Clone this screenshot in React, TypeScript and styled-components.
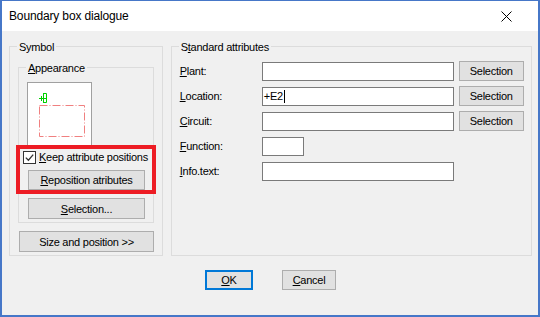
import styled, { createGlobalStyle } from 'styled-components';

const GlobalStyle = createGlobalStyle`
	html, body {
		margin: 0;
		padding: 0;
		width: 540px;
		height: 317px;
		overflow: hidden;
		background: #f0f0f0;
	}
`;

const Window = styled.div`
	width: 540px;
	height: 317px;
	box-sizing: border-box;
	display: flex;
	flex-direction: column;
	border: 2px solid #4677c8;
	border-top-width: 1px;
	background: #f0f0f0;
	font-family: 'Liberation Sans', Arial, sans-serif;
	font-size: 11px;
	letter-spacing: -0.25px;
	color: #000;
`;

const TitleBar = styled.header`
	height: 30px;
	flex-shrink: 0;
	display: flex;
	align-items: center;
	justify-content: space-between;
	padding: 0 26px 0 7px;
	background: #fff;
`;

const Title = styled.span`
	font-size: 12px;
	letter-spacing: -0.15px;
`;

const Body = styled.main`
	flex: 1;
	display: flex;
	flex-direction: column;
	padding: 15px 6px 0 7px;
`;

const Groups = styled.div`
	display: flex;
	gap: 8px;
`;

const GroupBox = styled.section<{ $width: number; $height: number; $pad: string }>`
	position: relative;
	box-sizing: border-box;
	width: ${(p) => p.$width}px;
	height: ${(p) => p.$height}px;
	padding: ${(p) => p.$pad};
	border: 1px solid #dcdcdc;
	display: flex;
	flex-direction: column;
	align-items: flex-start;
`;

const Caption = styled.span`
	position: absolute;
	top: -6px;
	left: 7px;
	padding: 0 2px;
	line-height: 13px;
	background: #f0f0f0;
`;

const Key = styled.span`
	text-decoration: underline;
`;

const Preview = styled.div`
	width: 65px;
	height: 63px;
	margin-left: 8px;
	box-sizing: border-box;
	border: 1px solid #a0a0a0;
	border-bottom: none;
	background: #fff;
`;

const Highlight = styled.div`
	width: 140px;
	height: 49px;
	margin-left: -3px;
	box-sizing: border-box;
	border: 4px solid #ed1c24;
	display: flex;
	flex-direction: column;
	align-items: flex-start;
	padding: 2px 0 0 3px;
`;

const CheckRow = styled.label`
	display: flex;
	align-items: center;
	gap: 3px;
	height: 13px;
	line-height: 13px;
`;

const Button = styled.button<{ $width: number; $height?: number; $default?: boolean }>`
	width: ${(p) => p.$width}px;
	height: ${(p) => p.$height ?? 21}px;
	box-sizing: border-box;
	padding: 0;
	margin: 0;
	font: inherit;
	letter-spacing: inherit;
	color: #000;
	background: #e1e1e1;
	border: ${(p) => (p.$default ? '2px solid #0078d7' : '1px solid #adadad')};
	display: flex;
	align-items: center;
	justify-content: center;
	flex-shrink: 0;
`;

const Spaced = styled.div<{ $top: number; $left: number }>`
	margin-top: ${(p) => p.$top}px;
	margin-left: ${(p) => p.$left}px;
`;

const Rows = styled.div`
	display: flex;
	flex-direction: column;
	gap: 5px;
`;

const Row = styled.div`
	display: flex;
	align-items: center;
	height: 20px;
`;

const Label = styled.span`
	width: 82px;
	line-height: 13px;
`;

const Field = styled.div<{ $width: number }>`
	width: ${(p) => p.$width}px;
	height: 19px;
	box-sizing: border-box;
	align-self: flex-end;
	border: 1px solid #7a7a7a;
	background: #fff;
	display: flex;
	align-items: center;
	padding-left: 1px;
	line-height: 13px;
`;

const Caret = styled.span`
	width: 1px;
	height: 13px;
	background: #000;
	margin-left: 1px;
`;

const SideButton = styled(Button)`
	margin-left: 5px;
`;

const Footer = styled.div`
	display: flex;
	justify-content: center;
	gap: 29px;
	margin-top: 14px;
`;

function PreviewDrawing() {
	return (
		<svg width="63" height="62" viewBox="0 0 63 62">
			<g stroke="#00d000" strokeWidth="1" fill="none">
				<path d="M11 15.5h5M13.5 13v5" />
				<path d="M15.5 10v10M15.5 10.5h3M15.5 19.5h3M18.5 10.5v9M15.5 15.5h3" />
			</g>
			<rect x="11.5" y="22.5" width="45" height="31" fill="none" stroke="#f08080" strokeWidth="1" strokeDasharray="8 2 1 2" />
		</svg>
	);
}

function CheckBox() {
	return (
		<svg width="13" height="13" viewBox="0 0 13 13">
			<rect x="0.5" y="0.5" width="12" height="12" fill="#fff" stroke="#333" />
			<path d="M2.8 6.6l2.6 2.6 4.8-5.6" fill="none" stroke="#333" strokeWidth="1.3" />
		</svg>
	);
}

function CloseIcon() {
	return (
		<svg width="11" height="11" viewBox="0 0 11 11">
			<path d="M0.5 0.5l10 10M10.5 0.5l-10 10" stroke="#000" strokeWidth="1" />
		</svg>
	);
}

const attributes = [
	{ key: 'P', rest: 'lant:', value: '', width: 192, select: true },
	{ key: 'L', rest: 'ocation:', value: '+E2', width: 192, select: true, caret: true },
	{ key: 'C', rest: 'ircuit:', value: '', width: 192, select: true },
	{ key: 'F', rest: 'unction:', value: '', width: 42 },
	{ key: 'I', rest: 'nfo.text:', value: '', width: 192 },
];

export default function App() {
	return (
		<>
			<GlobalStyle />
			<Window>
				<TitleBar>
					<Title>Boundary box dialogue</Title>
					<CloseIcon />
				</TitleBar>
				<Body>
					<Groups>
						<GroupBox $width={154} $height={210} $pad="20px 0 3px 8px">
							<Caption>Symbol</Caption>
							<GroupBox $width={136} $height={156} $pad="14px 0 3px 0">
								<Caption>
									<Key>A</Key>ppearance
								</Caption>
								<Preview>
									<PreviewDrawing />
								</Preview>
								<Highlight>
									<CheckRow>
										<CheckBox />
										<span>
											<Key>K</Key>eep attribute positions
										</span>
									</CheckRow>
									<Spaced $top={6} $left={5}>
										<Button $width={117} $height={20}>
											<Key>R</Key>eposition atributes
										</Button>
									</Spaced>
								</Highlight>
								<Spaced $top={4} $left={9}>
									<Button $width={117}>
										<Key>S</Key>election...
									</Button>
								</Spaced>
							</GroupBox>
							<Spaced $top={8} $left={1}>
								<Button $width={135}>Size and position &gt;&gt;</Button>
							</Spaced>
						</GroupBox>
						<GroupBox $width={362} $height={210} $pad="14px 0 0 8px">
							<Caption>
								S<Key>t</Key>andard attributes
							</Caption>
							<Rows>
								{attributes.map((a) => (
									<Row key={a.key}>
										<Label>
											<Key>{a.key}</Key>
											{a.rest}
										</Label>
										<Field $width={a.width}>
											{a.value}
											{a.caret && <Caret />}
										</Field>
										{a.select && (
											<SideButton $width={65} $height={20}>
												Selection
											</SideButton>
										)}
									</Row>
								))}
							</Rows>
						</GroupBox>
					</Groups>
					<Footer>
						<Button $width={48} $height={20} $default>
							<Key>O</Key>K
						</Button>
						<Button $width={54} $height={20}>
							<Key>C</Key>ancel
						</Button>
					</Footer>
				</Body>
			</Window>
		</>
	);
}
